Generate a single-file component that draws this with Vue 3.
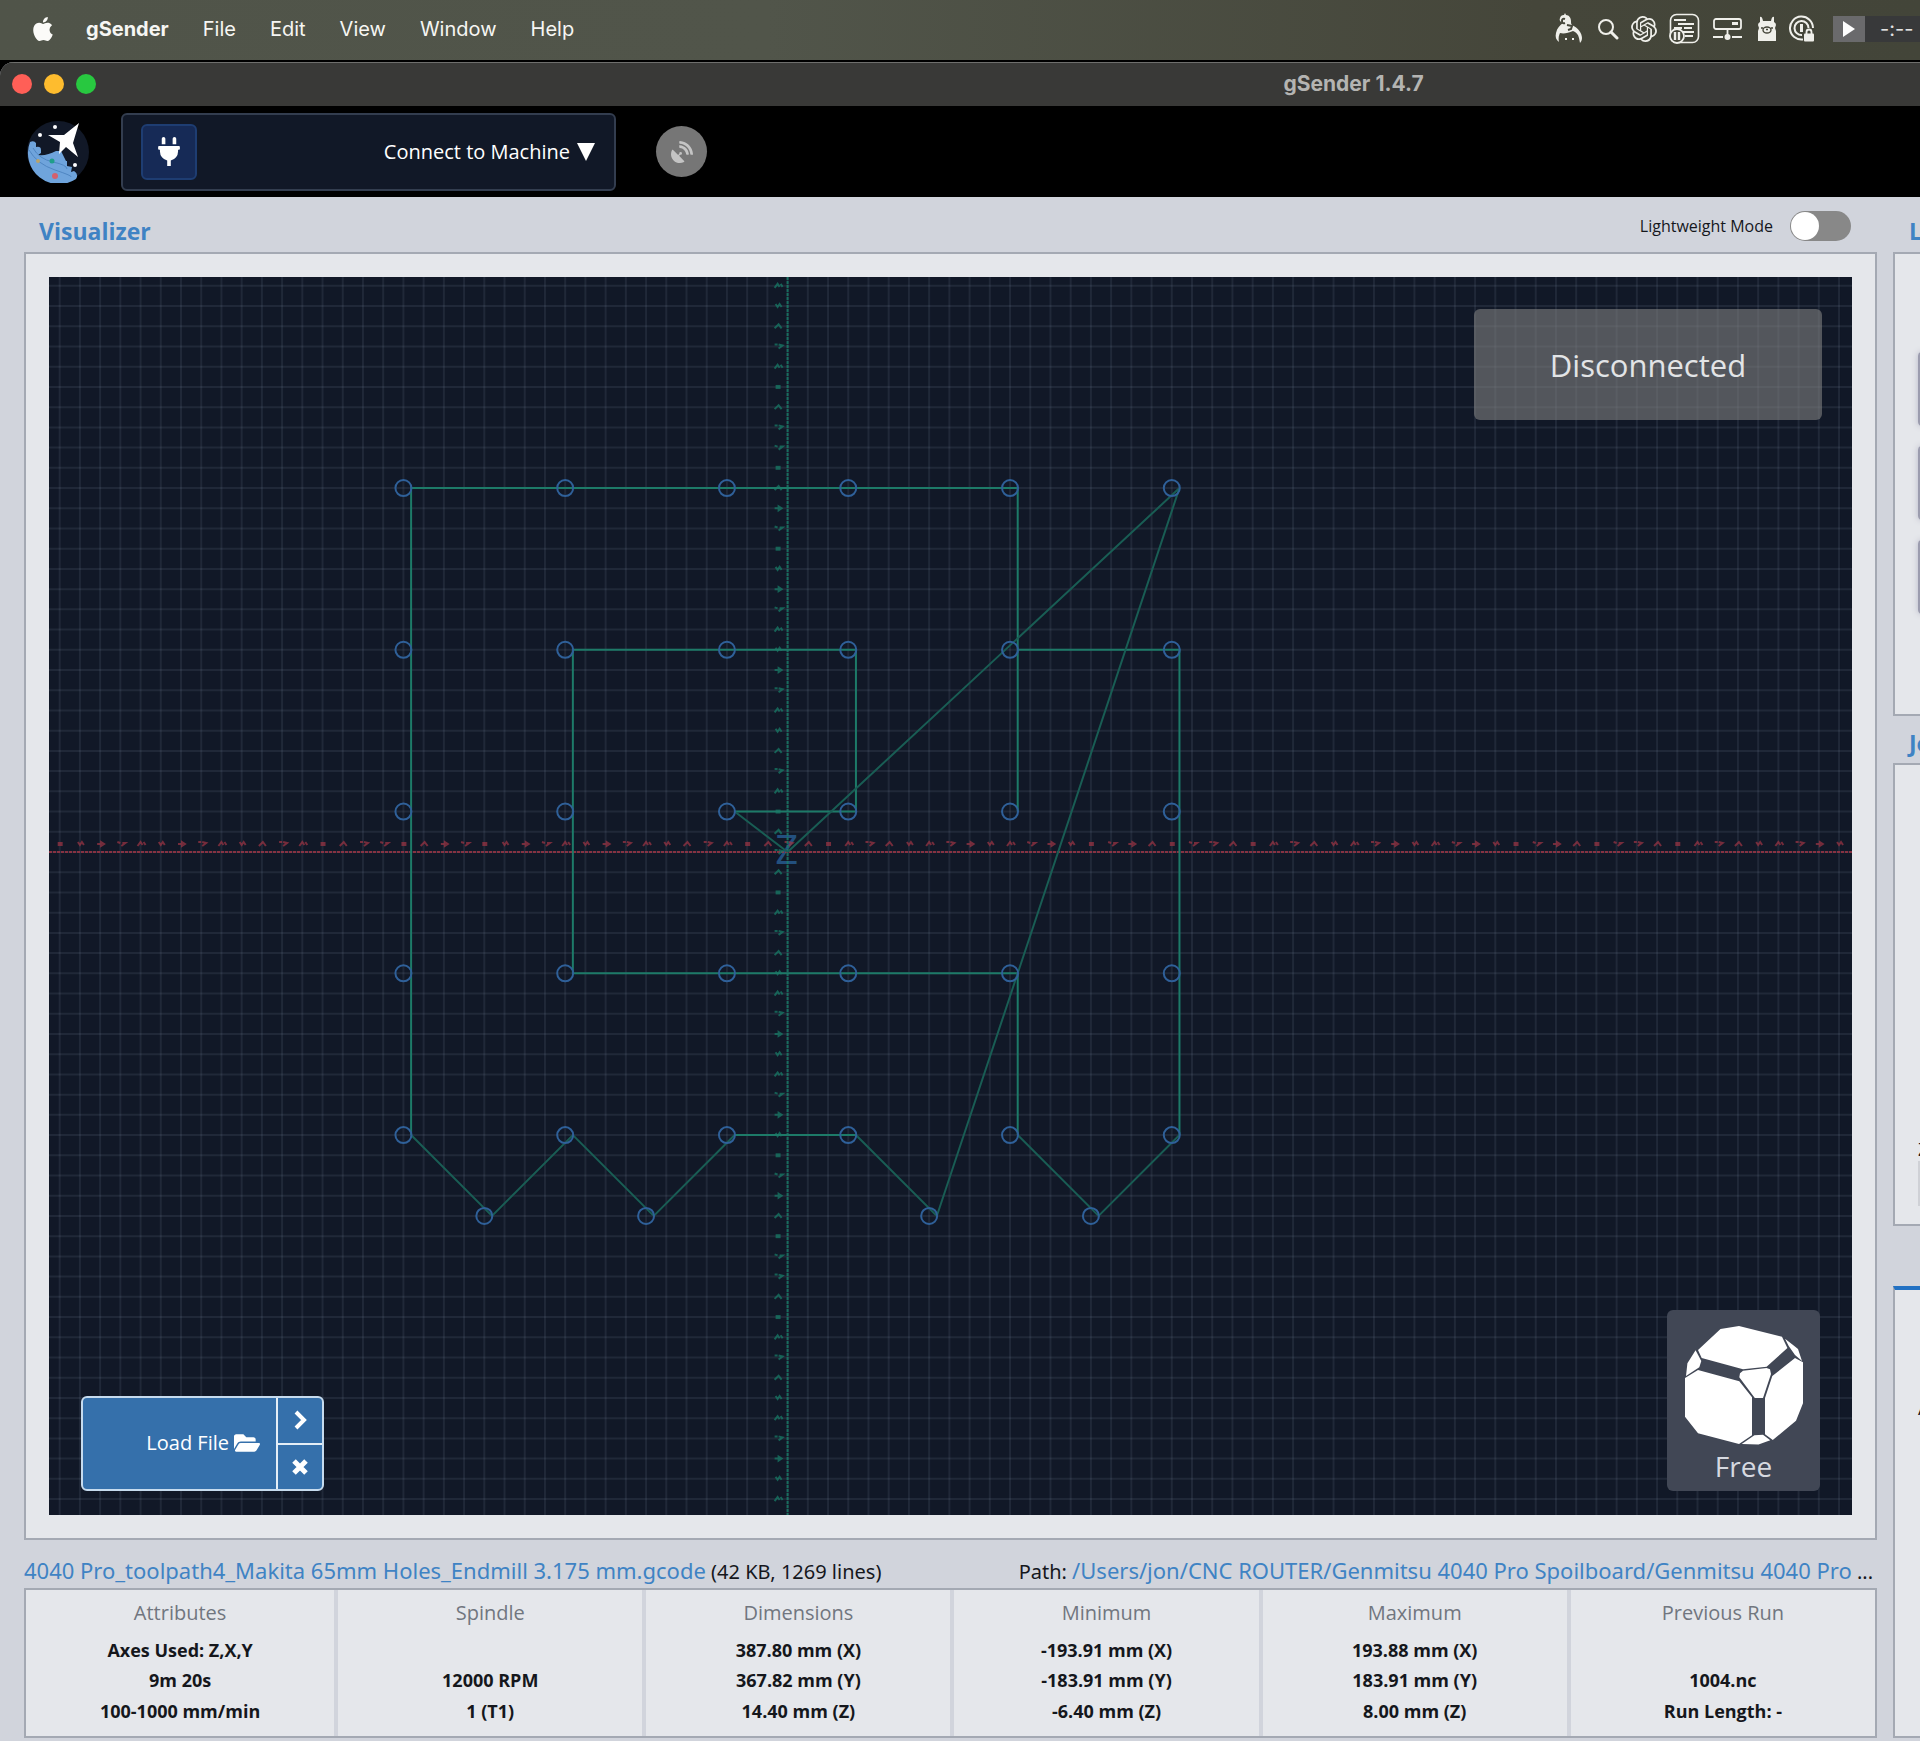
<script setup>
import { ref } from 'vue'

const menus = ['File', 'Edit', 'View', 'Window', 'Help']
const lightweight = ref(false)

// Canvas geometry: one grid cell is 10 mm
const W = 1803
const H = 1238
const U = 20.22
const OX = 738.6
const OY = 575
const gx = (n) => OX + n * U
const gy = (n) => OY + n * U

const cols = Array.from({ length: 90 }, (_, i) => i - 36).filter((n) => gx(n) > 0 && gx(n) < W)
const rows = Array.from({ length: 62 }, (_, i) => i - 28).filter((n) => gy(n) > 0 && gy(n) < H)

const holes = []
for (const y of [-18, -10, -2, 6, 14]) {
  for (const x of [-19, -11, -3, 3, 11, 19]) holes.push([x, y])
}
for (const x of [-15, -7, 7, 15]) holes.push([x, 18])

// Rapid moves run between the right edges of the holes
const OFF = 0.38
const toPath = (pts) => pts.map(([x, y], i) => (i ? 'L' : 'M') + gx(x) + ' ' + gy(y)).join('')
const shift = (pts) => pts.map(([x, y]) => [x + OFF, y])
const straight = [
  [[-19, 14], [-19, -18], [11, -18], [11, -2]],
  [[11, -2], [11, -10], [19, -10], [19, 14]],
  [[11, 14], [11, 6], [-11, 6], [-11, -10], [3, -10], [3, -2], [-3, -2]],
  [[-3, 14], [3, 14]]
].map((p) => toPath(shift(p))).join('')
const diagonal = [
  shift([[-19, 14], [-15, 18], [-11, 14], [-7, 18], [-3, 14]]),
  shift([[19, 14], [15, 18], [11, 14]]),
  [...shift([[3, 14], [7, 18], [19, -18]]), [0, 0]],
  [[-3 + OFF, -2], [0, 0]]
].map(toPath).join('')

const marks = [
  'M-4 -2h3M0 -2l4 1l-4 3',
  'M-4 2l3 -4l2 3M2 -2l2 3',
  'M-3 -2l2 3l2 -3l2 3',
  'M-4 0h3M0 -2l3 2l-3 2z',
  'M-4 -2l3 1M0 2l4 -3h-3',
  'M-2 -1l3 0l0 2l-3 0z',
  'M-4 2l4 -4l3 4'
]
const mark = (n) => marks[Math.abs(n * 5 + (n % 3)) % marks.length]

const heads = ['Attributes', 'Spindle', 'Dimensions', 'Minimum', 'Maximum', 'Previous Run']
const info = [
  ['Axes Used: Z,X,Y', '', '387.80 mm (X)', '-193.91 mm (X)', '193.88 mm (X)', ''],
  ['9m 20s', '12000 RPM', '367.82 mm (Y)', '-183.91 mm (Y)', '183.91 mm (Y)', '1004.nc'],
  ['100-1000 mm/min', '1 (T1)', '14.40 mm (Z)', '-6.40 mm (Z)', '8.00 mm (Z)', 'Run Length: -']
]
</script>

<template>
  <div class="screen">
    <header class="menubar">
      <nav class="menus">
        <svg class="apple" viewBox="0 0 24 24" width="24" height="24"><path fill="#fbfbf8" d="M12.152 6.896c-.948 0-2.415-1.078-3.96-1.04-2.04.027-3.91 1.183-4.961 3.014-2.117 3.675-.546 9.103 1.519 12.09 1.013 1.454 2.208 3.09 3.792 3.039 1.52-.065 2.09-.987 3.935-.987 1.831 0 2.35.987 3.96.948 1.637-.026 2.676-1.48 3.676-2.948 1.156-1.688 1.636-3.325 1.662-3.415-.039-.013-3.182-1.221-3.22-4.857-.026-3.04 2.48-4.494 2.597-4.559-1.429-2.09-3.623-2.324-4.39-2.376-2-.156-3.675 1.09-4.61 1.09zM15.53 3.83c.843-1.012 1.4-2.427 1.245-3.83-1.207.052-2.662.805-3.532 1.818-.78.896-1.454 2.338-1.273 3.714 1.338.104 2.715-.688 3.559-1.701" /></svg>
        <button class="menu app">gSender</button>
        <button v-for="m in menus" :key="m" class="menu">{{ m }}</button>
      </nav>
      <div class="tray">
        <svg width="30" height="32" viewBox="0 0 30 32">
          <path fill="#efefea" d="M5 5a4 4 0 0 1 4-3l1-2 1 2c3 0 5 3 5 6 0 2 0 3 1 4 6 3 10 8 10 13 0 2-1 4-2 5l-1-5c-1-4-3-6-6-7-5 2-9 3-13 2-1 2-2 5-1 9-3-2-4-5-3-9 1-5 4-8 7-10-3-1-4-3-3-5z" />
          <path fill="none" stroke="#45463a" stroke-width="2" d="M10 6q-3-1-3 2t3 2M12 12l5 1-1 3-3 1" />
          <path stroke="#efefea" stroke-width="2" d="M10 26h2M17 26h2" />
        </svg>
        <svg width="22" height="28" viewBox="0 0 22 28"><g fill="none" stroke="#efefea" stroke-width="2"><circle cx="9" cy="12" r="7" /><path stroke-width="3" stroke-linecap="round" d="M14 17l6 6" /></g></svg>
        <svg width="26" height="26" viewBox="0 0 24 24"><path fill="#efefea" d="M22.2819 9.8211a5.9847 5.9847 0 0 0-.5157-4.9108 6.0462 6.0462 0 0 0-6.5098-2.9A6.0651 6.0651 0 0 0 4.9807 4.1818a5.9847 5.9847 0 0 0-3.9977 2.9 6.0462 6.0462 0 0 0 .7427 7.0966 5.98 5.98 0 0 0 .511 4.9107 6.051 6.051 0 0 0 6.5146 2.9001A5.9847 5.9847 0 0 0 13.2599 24a6.0557 6.0557 0 0 0 5.7718-4.2058 5.9894 5.9894 0 0 0 3.9977-2.9001 6.0557 6.0557 0 0 0-.7475-7.0729zm-9.022 12.6081a4.4755 4.4755 0 0 1-2.8764-1.0408l.1419-.0804 4.7783-2.7582a.7948.7948 0 0 0 .3927-.6813v-6.7369l2.02 1.1686a.071.071 0 0 1 .038.052v5.5826a4.504 4.504 0 0 1-4.4945 4.4944zm-9.6607-4.1254a4.4708 4.4708 0 0 1-.5346-3.0137l.142.0852 4.783 2.7582a.7712.7712 0 0 0 .7806 0l5.8428-3.3685v2.3324a.0804.0804 0 0 1-.0332.0615L9.74 19.9502a4.4992 4.4992 0 0 1-6.1408-1.6464zM2.3408 7.8956a4.485 4.485 0 0 1 2.3655-1.9728V11.6a.7664.7664 0 0 0 .3879.6765l5.8144 3.3543-2.0201 1.1685a.0757.0757 0 0 1-.071 0l-4.8303-2.7865A4.504 4.504 0 0 1 2.3408 7.872zm16.5963 3.8558L13.1038 8.364 15.1192 7.2a.0757.0757 0 0 1 .071 0l4.8303 2.7913a4.4944 4.4944 0 0 1-.6765 8.1042v-5.6772a.79.79 0 0 0-.407-.667zm2.0107-3.0231l-.142-.0852-4.7735-2.7818a.7759.7759 0 0 0-.7854 0L9.409 9.2297V6.8974a.0662.0662 0 0 1 .0284-.0615l4.8303-2.7866a4.4992 4.4992 0 0 1 6.6802 4.66zM8.3065 12.863l-2.02-1.1638a.0804.0804 0 0 1-.038-.0567V6.0742a4.4992 4.4992 0 0 1 7.3757-3.4537l-.142.0805L8.704 5.459a.7948.7948 0 0 0-.3927.6813zm1.0976-2.3654l2.602-1.4998 2.6069 1.4998v2.9994l-2.5974 1.4997-2.6067-1.4997Z" /></svg>
        <svg width="32" height="32" viewBox="0 0 32 32">
          <g fill="none" stroke="#efefea" stroke-width="1.6"><rect x="1.500" y="1.500" width="28" height="28" rx="6" /><path d="M5 7h12M9 11h16M5 15h8M15 15h8M11 19h14M16 23h8" stroke-width="1.800" /></g>
          <circle cx="8" cy="23" r="7" fill="#45463a" stroke="#efefea" stroke-width="1.800" /><path stroke="#efefea" stroke-width="2.400" d="M6 19v8M10 19v8" />
        </svg>
        <svg width="32" height="24" viewBox="0 0 32 24"><g fill="none" stroke="#efefea" stroke-width="1.800"><rect x="1" y="2" width="27" height="10" rx="2" /><path d="M14.500 12v6M0 20h10M19 20h10" /></g><path fill="#efefea" d="M19 5h6v3h-6z" /><circle cx="14.500" cy="20" r="3" fill="#efefea" /></svg>
        <svg width="20" height="26" viewBox="0 0 20 26"><path fill="#efefea" d="M3 6V1q2-1 3 4h8q1-5 3-4v5q2 1 2 3l-1 3 1 3v10H1V15l1-3-1-3q0-2 2-3z" /><g fill="none" stroke="#45463a" stroke-width="1.400"><ellipse cx="10" cy="14" rx="4" ry="3" /><path d="M4 12h2M14 12h2M9 13.500h2" /></g></svg>
        <svg width="26" height="28" viewBox="0 0 26 28"><g fill="none" stroke="#efefea"><path stroke-width="2" d="M14 24.500A11.500 11.500 0 1 1 24 13" /><path stroke-width="2" d="M13 20A7 7 0 1 1 19.500 13" /><path stroke-width="3" d="M12.500 9v8" /><path stroke-width="1.800" d="M17.500 19v-2a2.500 2.500 0 0 1 5 0v2" /></g><rect x="15" y="18.500" width="10" height="8" rx="1" fill="#efefea" /></svg>
        <div class="player">
          <button class="play" aria-label="Play"><svg width="12" height="16" viewBox="0 0 12 16"><path fill="#fff" d="M0 0l12 8-12 8z" /></svg></button>
          <span class="time">-:--</span>
        </div>
      </div>
    </header>

    <div class="window">
      <div class="titlebar">
        <span class="lights"><i class="red"></i><i class="yellow"></i><i class="green"></i></span>
        <span class="wintitle">gSender 1.4.7</span>
        <span></span>
      </div>

      <div class="appbar">
        <svg class="logo" width="62" height="62" viewBox="0 0 62 62">
          <circle cx="31" cy="31" r="31" fill="#111827" />
          <path fill="#6fa4dc" d="M3 21q4-2 6 1v4q5-1 5 3v3l-3 2q9 1 18-4h5l2 4 3 6h1v5l5 1-1 5 3-1q5 3 2 8A31 31 0 0 1 3 21z" />
          <path fill="none" stroke="#4f86c2" d="M2 29q8 14 26 20t16 7M6 27q6 11 20 14t14 7" />
          <path fill="#fff" d="M52 2L46 22l5 14-12-10-7 7 1-12L21 14l16 0z" />
          <g fill="#fff"><circle cx="28" cy="6" r="2" /><circle cx="13" cy="14" r="2" /><circle cx="48" cy="44" r="2" /></g>
          <circle cx="25" cy="40" r="2.500" fill="#1f9e8a" /><circle cx="28" cy="55" r="3" fill="#d4606e" /><circle cx="11" cy="40" r="2" fill="#b9a36a" />
        </svg>
        <button class="connect">
          <span class="plug"><svg width="22" height="29" viewBox="0 0 384 512"><path fill="#fff" d="M320,32a32,32,0,0,0-64,0v96h64Zm48,128H16A16,16,0,0,0,0,176v32a16,16,0,0,0,16,16H32v32A160.07,160.07,0,0,0,160,412.8V512h64V412.8A160.07,160.07,0,0,0,352,256V224h16a16,16,0,0,0,16-16V176A16,16,0,0,0,368,160ZM128,32a32,32,0,0,0-64,0v96h64Z" /></svg></span>
          <span class="connect-label">Connect to Machine <svg width="18" height="18" viewBox="0 0 18 18"><path fill="#fff" d="M0 0h18L9 18z" /></svg></span>
        </button>
        <button class="remote" aria-label="Remote mode"><svg width="22" height="22" viewBox="0 0 512 512"><path fill="#c4c4c4" d="M305.44954,462.59c7.39157,7.29792,6.18829,20.09661-3.00038,25.00356-77.713,41.80281-176.72559,29.9105-242.34331-35.7082C-5.49624,386.28227-17.404,287.362,24.41381,209.554c4.89125-9.095,17.68975-10.29834,25.00318-3.00043L166.22872,323.36708l27.39411-27.39452c-.68759-2.60974-1.594-5.00071-1.594-7.81361a32.00407,32.00407,0,1,1,32.00407,32.00455c-2.79723,0-5.20378-.89075-7.79786-1.594l-27.40974,27.41015ZM511.9758,303.06732a16.10336,16.10336,0,0,1-16.002,17.00242H463.86031a15.96956,15.96956,0,0,1-15.89265-15.00213C440.46671,175.5492,336.45348,70.53427,207.03078,63.53328a15.84486,15.84486,0,0,1-15.00191-15.90852V16.02652A16.09389,16.09389,0,0,1,209.031.02425C372.25491,8.61922,503.47472,139.841,511.9758,303.06732Zm-96.01221-.29692a16.21093,16.21093,0,0,1-16.11142,17.29934H367.645a16.06862,16.06862,0,0,1-15.89265-14.70522c-6.90712-77.01094-68.118-138.91037-144.92467-145.22376a15.94,15.94,0,0,1-14.79876-15.89289V112.13393a16.134,16.134,0,0,1,17.29908-16.096C319.45132,104.5391,407.55627,192.64538,415.96359,302.7704Z" /></svg></button>
      </div>

      <main class="body">
        <section class="main-col">
          <div class="panel-head">
            <h2>Visualizer</h2>
            <label class="switch"><span>Lightweight Mode</span><input v-model="lightweight" type="checkbox" role="switch" /></label>
          </div>
          <div class="panel viz">
            <div class="canvas">
              <svg class="scene" :viewBox="`0 0 ${W} ${H}`">
                <g class="grid">
                  <line v-for="n in cols" :key="'c' + n" :x1="gx(n)" :x2="gx(n)" y1="0" :y2="H" />
                  <line v-for="n in rows" :key="'r' + n" x1="0" :x2="W" :y1="gy(n)" :y2="gy(n)" />
                </g>
                <text class="zlabel" :x="OX - 1" :y="OY + 12">Z</text>
                <g class="xaxis">
                  <line x1="0" :x2="W" :y1="OY" :y2="OY" />
                  <path v-for="n in cols" :key="'x' + n" :d="mark(n)" :transform="`translate(${gx(n) + 1} ${OY - 8})`" />
                </g>
                <g class="yaxis">
                  <line :x1="OX" :x2="OX" y1="0" :y2="H" />
                  <path v-for="n in rows" :key="'y' + n" :d="mark(n)" :transform="`translate(${OX - 9} ${gy(n)})`" />
                </g>
                <path class="rapid" :d="straight" />
                <path class="rapid dim" :d="diagonal" />
                <circle v-for="([x, y], i) in holes" :key="i" class="hole" :cx="gx(x)" :cy="gy(y)" r="8" />
              </svg>

              <div class="status">Disconnected</div>

              <div class="loader">
                <button class="load">Load File
                  <svg width="26" height="24" viewBox="0 0 576 512"><path fill="#fff" d="M572.694 292.093L500.27 416.248A63.997 63.997 0 0 1 444.989 448H45.025c-18.523 0-30.064-20.093-20.731-36.093l72.424-124.155A64 64 0 0 1 152 256h399.964c18.523 0 30.064 20.093 20.73 36.093zM152 224h328v-48c0-26.51-21.49-48-48-48H272l-64-64H48C21.49 64 0 85.49 0 112v278.046l69.077-118.418C86.214 242.25 117.989 224 152 224z" /></svg>
                </button>
                <div class="side">
                  <button aria-label="Recent files"><svg width="16" height="20" viewBox="0 0 16 20"><path fill="none" stroke="#fff" stroke-width="4" d="M4 2l8 8-8 8" /></svg></button>
                  <button aria-label="Close file"><svg width="16" height="16" viewBox="0 0 16 16"><path fill="none" stroke="#fff" stroke-width="5" d="M2 2l12 12M14 2L2 14" /></svg></button>
                </div>
              </div>

              <button class="view">
                <svg width="118" height="119" viewBox="0 0 118 119">
                  <path fill="#fff" d="M35.5 3L54 0L97 10.700L102.400 22L81.600 40.700L58 43.300L16.700 32L13 24zM10.600 24.300L16.300 35L14.300 41.300L1 50L2.400 37.300zM100 12.700L109 19.700L113 23L117 35L110 29L103.700 20zM13 44L54.300 55.300L67 71.300V109.300L54 118L13 107.300L0 90.700V52zM58 44.700L81.600 42L85 43.300L86 48L78 72H69.800L54.300 51.300L55 47.300zM110 32L118 36.300V77.300L111 94.700L87.800 114L80 108.300V72L87.300 50zM69.400 109.300L78 108.700L85.300 114.300L73.500 118.500L56.700 118z" />
                </svg>
                <span>Free</span>
              </button>
            </div>
          </div>

          <div class="file-line">
            <p class="file"><a href="#">4040 Pro_toolpath4_Makita 65mm Holes_Endmill 3.175 mm.gcode</a> (42 KB, 1269 lines)</p>
            <p class="path">Path: <a href="#">/Users/jon/CNC ROUTER/Genmitsu 4040 Pro Spoilboard/Genmitsu 4040 Pro</a> ...</p>
          </div>

          <table class="info">
            <thead><tr><th v-for="h in heads" :key="h" scope="col">{{ h }}</th></tr></thead>
            <tbody><tr v-for="(r, i) in info" :key="i"><td v-for="(c, j) in r" :key="j">{{ c }}</td></tr></tbody>
          </table>
        </section>

        <aside class="side-col">
          <h2 class="first">Location</h2>
          <div class="panel location">
            <button aria-label="X"></button><button aria-label="Y"></button><button aria-label="Z"></button>
          </div>
          <h2>Job Control</h2>
          <div class="panel job"><span>Z</span><div class="slot"></div></div>
          <div class="panel tabs"><span>A</span></div>
        </aside>
      </main>
    </div>
  </div>
</template>

<style>
body { margin: 0; background: #d1d4dc; }
</style>

<style scoped>
* { box-sizing: border-box; }
.screen { background: #000; font-family: "Open Sans", "Noto Sans", sans-serif; color: #15171c; overflow: hidden; }
button { border: 0; padding: 0; margin: 0; background: none; color: inherit; font: inherit; cursor: pointer; }
h2, p { margin: 0; }
a { color: #3f83c4; text-decoration: none; }
svg { display: block; flex: none; }

.menubar { height: 60px; display: flex; align-items: center; justify-content: space-between; padding: 0 0 2px 31px; background: linear-gradient(90deg, #505449, #51554a 40%, #45463a 80%, #434539); }
.menus { display: flex; align-items: center; gap: 34px; font-family: Inter, sans-serif; font-size: 20px; color: #f6f6f3; }
.apple { margin-right: -3px; }
.menu.app { font-weight: 700; }
.tray { display: flex; align-items: center; gap: 12px; }
.player { display: flex; align-items: center; margin-left: 6px; height: 26px; width: 87px; background: #38393a; }
.play { width: 32px; height: 26px; display: flex; align-items: center; justify-content: center; background: #6a6a6c; }
.time { padding-left: 15px; font: 20px Inter, sans-serif; color: #e2e2e2; }

.window { margin-top: 2px; border-radius: 14px 0 0 0; overflow: hidden; background: #d1d4dc; }
.titlebar { width: 141%; height: 44px; display: grid; grid-template-columns: 1fr auto 1fr; align-items: center; padding: 0 12px 2px; background: #393937; border-top: 1px solid #6f6f6d; }
.lights { display: flex; gap: 12px; }
.lights i { width: 20px; height: 20px; border-radius: 50%; }
.red { background: #ff5f57; }
.yellow { background: #febc2e; }
.green { background: #28c840; }
.wintitle { font: 700 21px/24px Inter, sans-serif; color: #b4b4b2; }

.appbar { height: 91px; display: flex; align-items: center; padding-left: 27px; background: #000; }
.connect { width: 495px; height: 78px; margin-left: 32px; padding: 0 19px 0 18px; display: flex; align-items: center; justify-content: space-between; background: #111827; border: 2px solid #333d4f; border-radius: 6px; color: #fff; }
.plug { width: 56px; height: 56px; display: flex; align-items: center; justify-content: center; background: #162a56; border: 2px solid #1e3d72; border-radius: 6px; }
.connect-label { display: flex; align-items: center; gap: 7px; font-size: 20px; }
.remote { width: 51px; height: 51px; margin-left: 40px; display: flex; align-items: center; justify-content: center; border-radius: 50%; background: #767676; }

.body { display: flex; gap: 16px; padding: 0 0 3px 24px; }
.main-col { flex: 1; min-width: 0; }
h2 { font-size: 23px; line-height: 30px; font-weight: 700; color: #3f83c4; white-space: nowrap; }
.panel-head { height: 55px; display: flex; justify-content: space-between; padding: 19px 26px 0 15px; }
.switch { display: flex; align-items: center; gap: 17px; height: 30px; margin-top: -5px; font-size: 16px; }
.switch input { appearance: none; width: 61px; height: 30px; margin: 0; border-radius: 15px; background: #888; padding: 1px; }
.switch input::before { content: ""; display: block; width: 28px; height: 28px; border-radius: 50%; background: #fff; }
.switch input:checked::before { margin-left: auto; }

.panel { background: #e5e7eb; border: 2px solid #a4a9b3; }
.viz { padding: 23px; }
.canvas { position: relative; background: #111827; }
.scene { width: 100%; height: auto; }
.grid line { stroke: #7f8ea3; stroke-opacity: 0.14; stroke-width: 2; }
.xaxis, .yaxis { fill: none; }
.xaxis { stroke: #a03545; }
.yaxis { stroke: #178069; }
.xaxis line, .yaxis line { stroke-width: 2; stroke-dasharray: 3 1; stroke-opacity: 0.8; }
.xaxis path, .yaxis path { stroke-width: 2; stroke-opacity: 0.7; }
.zlabel { font-size: 40px; fill: #23507f; text-anchor: middle; }
.rapid { fill: none; stroke: #1d7a68; stroke-width: 2; }
.rapid.dim { stroke: #195d54; }
.hole { fill: none; stroke: #2f6099; stroke-width: 2; }

.status { position: absolute; top: 32px; right: 30px; width: 348px; height: 111px; display: flex; align-items: center; justify-content: center; border-radius: 6px; background: rgba(128, 128, 128, 0.6); color: #e2e4e6; font-size: 31px; }
.loader { position: absolute; left: 32px; bottom: 24px; display: flex; width: 243px; height: 95px; border: 2px solid #c6dbee; border-radius: 6px; background: #3570ab; color: #fff; overflow: hidden; }
.load { flex: 1; display: flex; align-items: center; justify-content: flex-end; gap: 5px; padding: 0 16px 2px 0; font-size: 20px; }
.side { width: 46px; display: flex; flex-direction: column; border-left: 2px solid #e4eef7; }
.side button { flex: 1; display: flex; align-items: center; justify-content: center; }
.side button + button { border-top: 2px solid #e4eef7; }
.view { position: absolute; right: 32px; bottom: 24px; width: 153px; height: 181px; padding-top: 16px; display: flex; flex-direction: column; align-items: center; border-radius: 6px; background: #414755; color: #d6d9e0; font-size: 28px; line-height: 42px; }

.file-line { height: 48px; display: flex; justify-content: space-between; align-items: baseline; padding: 14px 4px 0 0; font-family: "Noto Sans", "Open Sans", sans-serif; font-size: 20px; line-height: 32px; white-space: nowrap; }
.file-line a { font-size: 22px; }

.info { width: 100%; height: 150px; table-layout: fixed; border-collapse: separate; border-spacing: 0; background: #e5e7eb; border: 2px solid #a4a9b3; text-align: center; padding: 0; }
.info th, .info td { padding: 0; border-left: 4px solid #d1d4dc; }
.info th:first-child, .info td:first-child { border-left: 0; }
.info th { height: 45px; font-size: 20px; font-weight: 400; color: #71767f; }
.info td { height: 30px; font-size: 18px; line-height: 30px; font-weight: 700; }
.info tbody tr:last-child td { height: 41px; padding-bottom: 10px; }

.side-col { flex: 0 0 27px; display: flex; flex-direction: column; overflow: hidden; }
.side-col h2 { height: 47px; padding: 12px 0 0 16px; }
.side-col h2.first { height: 55px; padding-top: 19px; }
.side-col .panel { border-right: 0; padding-left: 23px; }
.location { height: 464px; padding-top: 98px; display: flex; flex-direction: column; gap: 20px; }
.location button { flex: none; width: 90px; height: 74px; border: 2px solid #9b9cae; border-radius: 4px; box-shadow: 0 0 6px #b8b9c8; }
.job { height: 463px; display: flex; flex-direction: column; justify-content: flex-end; padding-bottom: 18px; font-size: 18px; }
.slot { width: 90px; height: 45px; border: 2px solid #cfd1d6; }
.tabs { flex: 1; margin-top: 60px; padding-top: 104px; border-top: 4px solid #2271c3; font-size: 20px; }
</style>
